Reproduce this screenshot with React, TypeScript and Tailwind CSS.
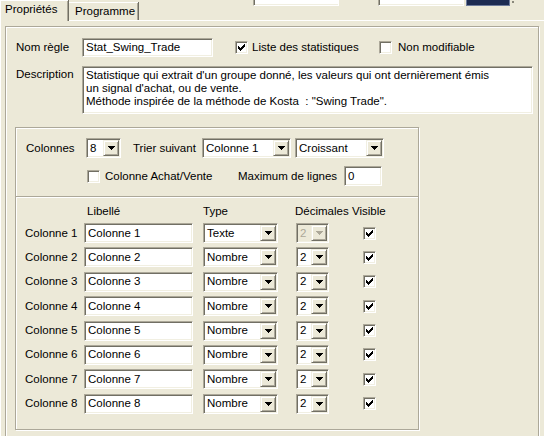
const sunken =
  "border border-t-[#aca899] border-l-[#aca899] border-b-white border-r-white shadow-[inset_1px_1px_0_#716f64,inset_-1px_-1px_0_#f1efe2]";
const raised =
  "border border-t-[#f1efe2] border-l-[#f1efe2] border-b-[#716f64] border-r-[#716f64] shadow-[inset_1px_1px_0_#fff,inset_-1px_-1px_0_#aca899]";

function Arrow({ disabled }: { disabled?: boolean }) {
  return (
    <svg width="7" height="4" viewBox="0 0 7 4" shapeRendering="crispEdges" className={disabled ? "fill-[#aca899]" : "fill-black"}>
      <path d="M0 0h7v1H0z M1 1h5v1H1z M2 2h3v1H2z M3 3h1v1H3z" />
    </svg>
  );
}

function TextBox({ value, className }: { value: string; className: string }) {
  return (
    <div className={`${sunken} ${className} flex items-center bg-white pl-[3px] whitespace-nowrap overflow-hidden`}>
      {value}
    </div>
  );
}

function Combo({ value, className, disabled }: { value: string; className: string; disabled?: boolean }) {
  return (
    <div
      className={`${sunken} ${className} flex h-[20px] items-center justify-between pl-[3px] pr-[1px] ${
        disabled ? "bg-[#ece9d8] text-[#aca899]" : "bg-white"
      }`}
    >
      <span className="whitespace-nowrap">{value}</span>
      <div className={`${raised} flex h-[16px] w-[16px] items-center justify-center bg-[#ece9d8]`}>
        <Arrow disabled={disabled} />
      </div>
    </div>
  );
}

function Check({ checked }: { checked?: boolean }) {
  return (
    <div className={`${sunken} flex h-[13px] w-[13px] shrink-0 items-center justify-center bg-white`}>
      {checked && (
        <svg width="7" height="7" viewBox="0 0 7 7" shapeRendering="crispEdges" className="fill-black">
          <path d="M6 0h1v1H6z M5 1h2v1H5z M0 2h1v1H0z M4 2h3v1H4z M0 3h2v1H0z M3 3h3v1H3z M0 4h5v1H0z M1 5h3v1H1z M2 6h1v1H2z" />
        </svg>
      )}
    </div>
  );
}

const rows = [1, 2, 3, 4, 5, 6, 7, 8];

export default function App() {
  return (
    <div className="h-[436px] w-[544px] overflow-hidden bg-[#ece9d8] font-['Liberation_Sans',Arial,sans-serif] text-[11.5px] leading-[13px] text-black">
      {/* tabs + cut-off toolbar */}
      <div className="flex h-[20px] items-start">
        <div className="relative z-10 h-[21px] w-[68px] border-l border-t border-white bg-[#ece9d8] pl-[4px] pt-[2px] shadow-[inset_-1px_0_0_#aca899,1px_0_0_#716f64]">
          Propriétés
        </div>
        <div className="mt-[2px] h-[18px] w-[70px] border-t border-white pl-[7px] pt-[2px] shadow-[inset_-1px_0_0_#aca899,1px_0_0_#716f64]">
          Programme
        </div>
        <div className="ml-[115px] h-[6px] w-[86px] border-b border-r border-l border-b-white border-r-white border-l-[#aca899] bg-white shadow-[inset_1px_0_0_#716f64,inset_0_-1px_0_#f1efe2]" />
        <div className="ml-[39px] h-[6px] w-[86px] border-b border-r border-l border-b-white border-r-white border-l-[#aca899] bg-white shadow-[inset_1px_0_0_#716f64,inset_0_-1px_0_#f1efe2]" />
        <div className="ml-[2px] h-[6px] w-[44px] border-b border-l border-r border-[#6d7b9c] bg-[#1c2b52]" />
        <div className="ml-[2px] mt-[1px] h-[2px] w-[2px] bg-[#8a887b]" />
      </div>

      {/* tab panel */}
      <div className="h-[416px] border-l border-t border-white pl-[4px] pt-[5px]">
        <div className="h-[420px] w-[534px] border border-[#aca899] pl-[10px] pt-[11px] shadow-[inset_1px_1px_0_#fff,1px_1px_0_#fff]">
          <div className="flex h-[19px] items-center">
            <span className="w-[66px]">Nom règle</span>
            <TextBox value="Stat_Swing_Trade" className="h-[19px] w-[131px]" />
            <div className="ml-[22px]">
              <Check checked />
            </div>
            <span className="ml-[4px] w-[127px]">Liste des statistiques</span>
            <Check />
            <span className="ml-[6px]">Non modifiable</span>
          </div>

          <div className="mt-[9px] flex items-start">
            <span className="w-[66px] pt-[2px]">Description</span>
            <div className={`${sunken} h-[48px] w-[451px] bg-white px-[3px] pt-[2px] whitespace-pre`}>
              <div>Statistique qui extrait d'un groupe donné, les valeurs qui ont dernièrement émis</div>
              <div>un signal d'achat, ou de vente.</div>
              <div>Méthode inspirée de la méthode de Kosta  : "Swing Trade".</div>
            </div>
          </div>

          {/* columns group */}
          <div className="ml-[-1px] mt-[13px] h-[303px] w-[404px] border border-[#aca899] shadow-[inset_1px_1px_0_#fff,1px_1px_0_#fff]">
            <div className="mt-[10px] flex h-[20px] items-center pl-[10px]">
              <span className="w-[60px]">Colonnes</span>
              <Combo value="8" className="w-[35px]" />
              <span className="ml-[12px] w-[69px]">Trier suivant</span>
              <Combo value="Colonne 1" className="w-[89px]" />
              <Combo value="Croissant" className="ml-[4px] w-[89px]" />
            </div>
            <div className="mt-[8px] flex h-[20px] items-center pl-[71px]">
              <Check />
              <span className="ml-[5px] w-[133px]">Colonne Achat/Vente</span>
              <span className="w-[106px]">Maximum de lignes</span>
              <TextBox value="0" className="h-[20px] w-[38px]" />
            </div>
            <div className="mt-[10px] h-[2px] border-b border-t border-b-white border-t-[#aca899]" />

            <div className="mt-[7px] flex h-[13px] pl-[71px]">
              <span className="w-[116px]">Libellé</span>
              <span className="w-[92px]">Type</span>
              <span className="w-[57px]">Décimales</span>
              <span>Visible</span>
            </div>

            <div className="mt-[5px] flex flex-col gap-[4.4px]">
              {rows.map((n) => (
                <div key={n} className="flex h-[20px] items-center pl-[9px]">
                  <span className="w-[59px]">Colonne {n}</span>
                  <TextBox value={`Colonne ${n}`} className="h-[20px] w-[109px]" />
                  <Combo value={n === 1 ? "Texte" : "Nombre"} className="ml-[10px] w-[75px]" />
                  <Combo value="2" className="ml-[18px] w-[33px]" disabled={n === 1} />
                  <div className="ml-[34px]">
                    <Check checked />
                  </div>
                </div>
              ))}
            </div>
          </div>
        </div>
      </div>
    </div>
  );
}
